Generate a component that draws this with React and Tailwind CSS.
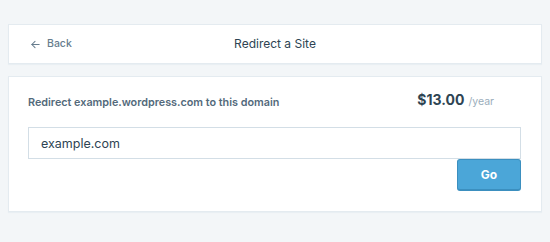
import React, { useState } from 'react';

const BackArrow = () => (
  <svg width="11" height="11" viewBox="0 0 24 24" fill="none" stroke="currentColor" strokeWidth="2.2" strokeLinecap="round" strokeLinejoin="round">
    <path d="M20 12H4" />
    <path d="M11 5l-7 7 7 7" />
  </svg>
);

const App = () => {
  const [domain, setDomain] = useState('example.com');

  return (
    <div className="h-[242px] bg-[#f3f6f8] pt-6 px-2 font-['Inter','Liberation_Sans',sans-serif]">
      {/* Cabeçalho */}
      <div className="h-[40px] bg-white border border-[#e4ebf0] shadow-[0_1px_1px_#e9eff3] grid grid-cols-3 items-center px-[21px]">
        <button className="flex items-center gap-[6px] text-[10.5px] text-[#667c8d] font-medium">
          <BackArrow />
          Back
        </button>
        <h1 className="text-center text-[12px] text-[#2e4453] whitespace-nowrap">Redirect a Site</h1>
        <div />
      </div>

      {/* Cartão */}
      <div className="mt-3 bg-white border border-[#e4ebf0] shadow-[0_1px_1px_#e9eff3] pt-[13px] pb-[20px] pl-[19px] pr-[20px]">
        <div className="flex justify-between items-start mb-[15px]">
          <p className="mt-[5px] text-[10.8px] leading-[16px] font-semibold text-[#536a7b]">
            Redirect example.wordpress.com to this domain
          </p>
          <div className="mr-[27px] flex items-baseline gap-[4px] leading-[20px]">
            <span className="text-[14px] font-bold text-[#2e4453]">$13.00</span>
            <span className="text-[10.5px] text-[#9aadbb]">/year</span>
          </div>
        </div>
        <input
          type="text"
          value={domain}
          onChange={(e) => setDomain(e.target.value)}
          className="block w-full h-[32px] border border-[#d3dee6] px-[12px] text-[12.5px] text-[#2e4453] outline-none"
        />
        <div className="flex justify-end">
          <button className="w-[64px] h-[32px] rounded-[3px] bg-[#4ba6d8] border border-[#3b8fbf] border-b-2 text-white text-[12px] font-bold">
            Go
          </button>
        </div>
      </div>
    </div>
  );
};

export default App;
